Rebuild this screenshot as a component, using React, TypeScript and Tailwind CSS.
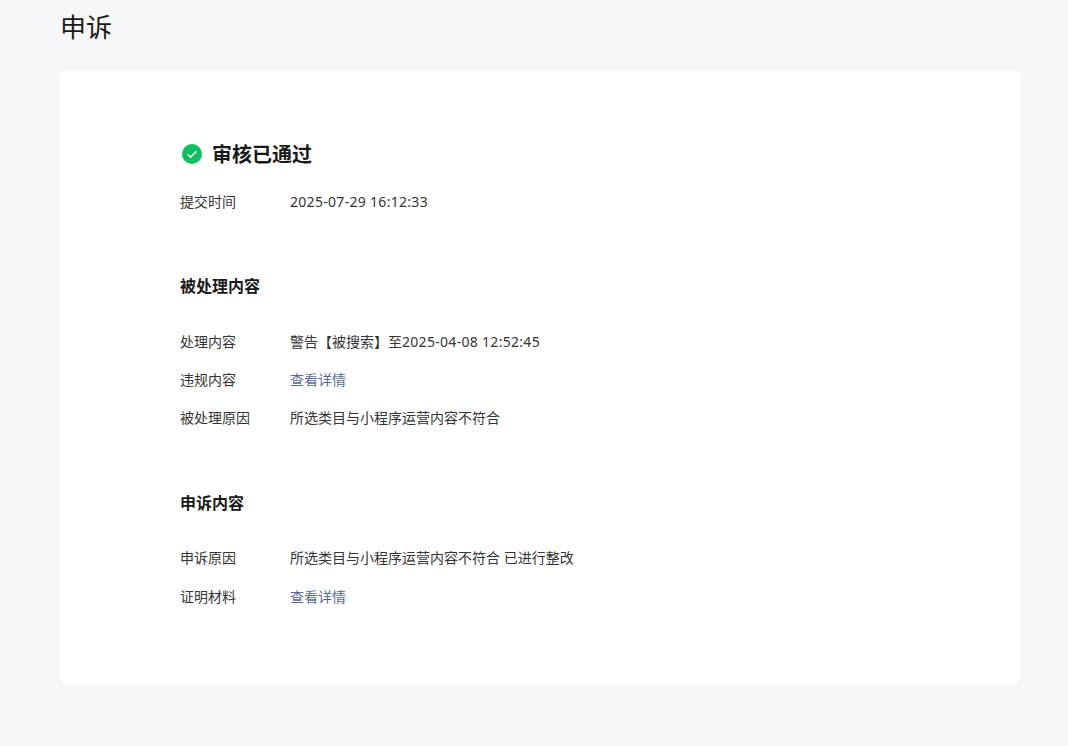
import React from 'react';

const font = "font-['Noto_Sans','Noto_Sans_CJK_SC',sans-serif]";

const Row = ({ label, children, link }: { label: string; children: React.ReactNode; link?: boolean }) => (
  <div className="flex h-[38px] items-center text-[14px]">
    <div className="w-[110px] text-[#353535]">{label}</div>
    <div className={link ? 'text-[#576b95]' : 'text-[#353535]'}>{children}</div>
  </div>
);

const Num = ({ children }: { children: React.ReactNode }) => (
  <span className="tracking-[0.3px]">{children}</span>
);

export default function App() {
  return (
    <div className={`min-h-[746px] bg-[#f6f7f9] pl-[60px] pr-[48px] ${font}`}>
      <h1 className="pt-[8px] h-[71px] text-[26px] leading-[38px] font-normal text-[#1a1a1a]">申诉</h1>
      <div className="h-[613px] rounded-lg bg-white pl-[120px] pt-[66px]">
        <div className="flex items-center h-[34px]">
          <svg width="22" height="22" viewBox="0 0 22 22" className="mr-[9px] ml-[1px]">
            <circle cx="11" cy="11" r="10" fill="#07c160" />
            <path d="M6.6 11.2l3 3 5.8-5.8" fill="none" stroke="#fff" strokeWidth="1.6" />
          </svg>
          <span className="mt-[2px] text-[20px] font-bold text-[#1a1a1a]">审核已通过</span>
        </div>
        <div className="mt-[11px]">
          <Row label="提交时间"><Num>2025-07-29 16:12:33</Num></Row>
        </div>
        <h2 className="mt-[54px] text-[16px] leading-[24px] font-bold text-[#1a1a1a]">被处理内容</h2>
        <div className="mt-[24px]">
          <Row label="处理内容">警告【被搜索】至<Num>2025-04-08 12:52:45</Num></Row>
          <Row label="违规内容" link>查看详情</Row>
          <Row label="被处理原因">所选类目与小程序运营内容不符合</Row>
        </div>
        <h2 className="mt-[55px] text-[16px] leading-[24px] font-bold text-[#1a1a1a]">申诉内容</h2>
        <div className="mt-[23px]">
          <Row label="申诉原因">所选类目与小程序运营内容不符合 已进行整改</Row>
          <div className="mt-[1px]">
            <Row label="证明材料" link>查看详情</Row>
          </div>
        </div>
      </div>
    </div>
  );
}
